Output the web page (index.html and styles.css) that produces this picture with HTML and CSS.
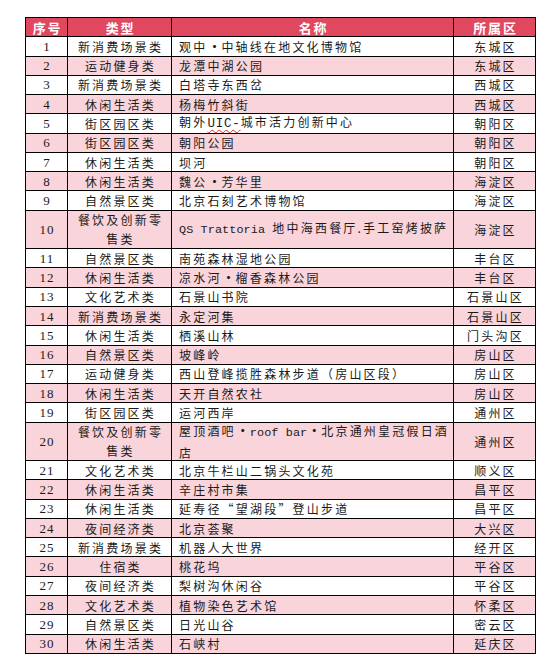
FILE: index.html
```html
<!DOCTYPE html>
<html lang="zh-CN">
<head>
<meta charset="utf-8">
<title>场景名单</title>
<link rel="stylesheet" href="styles.css">
</head>
<body>
<div class="sheet">
  <div class="row head"><div class="c">序号</div><div class="c">类型</div><div class="c">名称</div><div class="c">所属区</div></div>
  <div class="row"><div class="c num">1</div><div class="c">新消费场景类</div><div class="c name"><span>观中<span class="dot">·</span>中轴线在地文化博物馆</span></div><div class="c">东城区</div></div>
  <div class="row"><div class="c num">2</div><div class="c">运动健身类</div><div class="c name"><span>龙潭中湖公园</span></div><div class="c">东城区</div></div>
  <div class="row"><div class="c num">3</div><div class="c">新消费场景类</div><div class="c name"><span>白塔寺东西岔</span></div><div class="c">西城区</div></div>
  <div class="row"><div class="c num">4</div><div class="c">休闲生活类</div><div class="c name"><span>杨梅竹斜街</span></div><div class="c">西城区</div></div>
  <div class="row"><div class="c num">5</div><div class="c">街区园区类</div><div class="c name"><span>朝外<span class="lat spell">UIC-</span>城市活力创新中心</span></div><div class="c">朝阳区</div></div>
  <div class="row"><div class="c num">6</div><div class="c">街区园区类</div><div class="c name"><span>朝阳公园</span></div><div class="c">朝阳区</div></div>
  <div class="row"><div class="c num">7</div><div class="c">休闲生活类</div><div class="c name"><span>坝河</span></div><div class="c">朝阳区</div></div>
  <div class="row"><div class="c num">8</div><div class="c">休闲生活类</div><div class="c name"><span>魏公<span class="dot">·</span>芳华里</span></div><div class="c">海淀区</div></div>
  <div class="row"><div class="c num">9</div><div class="c">自然景区类</div><div class="c name"><span>北京石刻艺术博物馆</span></div><div class="c">海淀区</div></div>
  <div class="row tall"><div class="c num">10</div><div class="c"><span>餐饮及创新零<br>售类</span></div><div class="c name"><span><span class="lat">QS Trattoria&nbsp;</span>地中海西餐厅.手工窑烤披萨</span></div><div class="c">海淀区</div></div>
  <div class="row"><div class="c num">11</div><div class="c">自然景区类</div><div class="c name"><span>南苑森林湿地公园</span></div><div class="c">丰台区</div></div>
  <div class="row"><div class="c num">12</div><div class="c">休闲生活类</div><div class="c name"><span>凉水河<span class="dot">·</span>榴香森林公园</span></div><div class="c">丰台区</div></div>
  <div class="row"><div class="c num">13</div><div class="c">文化艺术类</div><div class="c name"><span>石景山书院</span></div><div class="c">石景山区</div></div>
  <div class="row"><div class="c num">14</div><div class="c">新消费场景类</div><div class="c name"><span>永定河集</span></div><div class="c">石景山区</div></div>
  <div class="row"><div class="c num">15</div><div class="c">休闲生活类</div><div class="c name"><span>栖溪山林</span></div><div class="c">门头沟区</div></div>
  <div class="row"><div class="c num">16</div><div class="c">自然景区类</div><div class="c name"><span>坡峰岭</span></div><div class="c">房山区</div></div>
  <div class="row"><div class="c num">17</div><div class="c">运动健身类</div><div class="c name"><span>西山登峰揽胜森林步道（房山区段）</span></div><div class="c">房山区</div></div>
  <div class="row"><div class="c num">18</div><div class="c">休闲生活类</div><div class="c name"><span>天开自然农社</span></div><div class="c">房山区</div></div>
  <div class="row"><div class="c num">19</div><div class="c">街区园区类</div><div class="c name"><span>运河西岸</span></div><div class="c">通州区</div></div>
  <div class="row tall"><div class="c num">20</div><div class="c"><span>餐饮及创新零<br>售类</span></div><div class="c name"><span>屋顶酒吧<span class="dot">·</span><span class="lat">roof bar</span><span class="dot">·</span>北京通州皇冠假日酒<br>店</span></div><div class="c">通州区</div></div>
  <div class="row"><div class="c num">21</div><div class="c">文化艺术类</div><div class="c name"><span>北京牛栏山二锅头文化苑</span></div><div class="c">顺义区</div></div>
  <div class="row"><div class="c num">22</div><div class="c">休闲生活类</div><div class="c name"><span>辛庄村市集</span></div><div class="c">昌平区</div></div>
  <div class="row"><div class="c num">23</div><div class="c">休闲生活类</div><div class="c name"><span>延寿径“望湖段”登山步道</span></div><div class="c">昌平区</div></div>
  <div class="row"><div class="c num">24</div><div class="c">夜间经济类</div><div class="c name"><span>北京荟聚</span></div><div class="c">大兴区</div></div>
  <div class="row"><div class="c num">25</div><div class="c">新消费场景类</div><div class="c name"><span>机器人大世界</span></div><div class="c">经开区</div></div>
  <div class="row"><div class="c num">26</div><div class="c">住宿类</div><div class="c name"><span>桃花坞</span></div><div class="c">平谷区</div></div>
  <div class="row"><div class="c num">27</div><div class="c">夜间经济类</div><div class="c name"><span>梨树沟休闲谷</span></div><div class="c">平谷区</div></div>
  <div class="row"><div class="c num">28</div><div class="c">文化艺术类</div><div class="c name"><span>植物染色艺术馆</span></div><div class="c">怀柔区</div></div>
  <div class="row"><div class="c num">29</div><div class="c">自然景区类</div><div class="c name"><span>日光山谷</span></div><div class="c">密云区</div></div>
  <div class="row"><div class="c num">30</div><div class="c">休闲生活类</div><div class="c name"><span>石峡村</span></div><div class="c">延庆区</div></div>
</div>
</body>
</html>
```
FILE: styles.css
```css
body {
  margin: 0;
  background: #ffffff;
  font-family: "Noto Sans CJK SC", "Noto Sans", sans-serif;
  color: #1a1a1a;
}

.sheet {
  margin: 17px 0 0 25px;
  width: 511px;
  box-sizing: border-box;
  border-left: 1px solid #000;
  border-top: 1px solid #000;
}

.row {
  display: grid;
  grid-template-columns: 42px 104px 282px 82px;
  height: 19.27px;
  box-sizing: border-box;
  border-bottom: 1px solid #000;
  background: #ffffff;
}

.row.tall {
  height: 38.54px;
}

.row:nth-child(2n+3) {
  background: #f9d4db;
}

.row.head {
  background: #e0485f;
  color: #ffffff;
}

.c {
  display: flex;
  align-items: center;
  justify-content: center;
  box-sizing: border-box;
  border-right: 1px solid #000;
  font-size: 12px;
  line-height: 19px;
  letter-spacing: 2.2px;
  padding-left: 2px;
  white-space: nowrap;
  text-align: center;
  overflow: hidden;
}

.head .c {
  font-size: 13px;
  font-weight: bold;
  letter-spacing: 1.8px;
}

.num {
  font-family: "Liberation Serif", "Noto Sans CJK SC", serif;
  font-size: 13px;
  letter-spacing: 1px;
  padding-left: 1px;
}

.name {
  justify-content: flex-start;
  text-align: left;
  padding-left: 7px;
}

.lat {
  font-family: "Liberation Mono", monospace;
  font-size: 11.8px;
  letter-spacing: 0.1px;
}

.spell {
  font-size: 12.5px;
  text-decoration: underline wavy #e0282a;
  text-decoration-thickness: 1px;
  text-underline-offset: 2px;
  letter-spacing: 0.8px;
}

.dot {
  display: inline-block;
  width: 14px;
  letter-spacing: 0;
  text-align: center;
  font-weight: bold;
}
```
